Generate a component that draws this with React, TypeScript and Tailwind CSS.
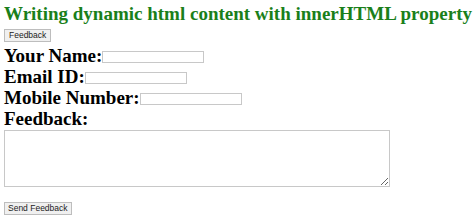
import React from "react"

const serif = "font-['Liberation_Serif','Times_New_Roman',serif]"
const sans = "font-['Liberation_Sans',Arial,sans-serif]"

function Field({ label, width = "w-[102px]" }: { label: string; width?: string }) {
  return (
    <div className="flex h-[21px] items-end">
      <span className={`${serif} text-[19px] font-bold leading-[21px] text-black`}>{label}</span>
      <input
        type="text"
        className={`mb-[3px] h-[12px] ${width} border border-[#c8c8c8] bg-white outline-none`}
      />
    </div>
  )
}

export default function App() {
  return (
    <div className="min-h-[218px] w-[474px] bg-white pl-[4px] pt-[3px]">
      <h1 className={`${serif} text-[19px] font-bold leading-[22px] text-[#1a7f1a]`}>
        Writing dynamic html content with innerHTML property
      </h1>
      <button
        className={`${sans} mt-[4px] block h-[13px] border border-[#bdbdbd] bg-[#f0f0f0] px-[4px] text-[8.5px] leading-[11px] text-[#222]`}
      >
        Feedback
      </button>
      <div className="mt-[3px] flex flex-col">
        <Field label="Your Name:" />
        <Field label="Email ID:" />
        <Field label="Mobile Number:" />
        <div className="flex h-[21px] items-end">
          <span className={`${serif} text-[19px] font-bold leading-[21px] text-black`}>Feedback:</span>
        </div>
        <textarea className="mt-[1px] block h-[57px] w-[386px] resize border border-[#c8c8c8] bg-white outline-none" />
      </div>
      <button
        className={`${sans} mt-[15px] block h-[13px] border border-[#bdbdbd] bg-[#f0f0f0] px-[3px] text-[8.5px] leading-[11px] text-[#222]`}
      >
        Send Feedback
      </button>
    </div>
  )
}
